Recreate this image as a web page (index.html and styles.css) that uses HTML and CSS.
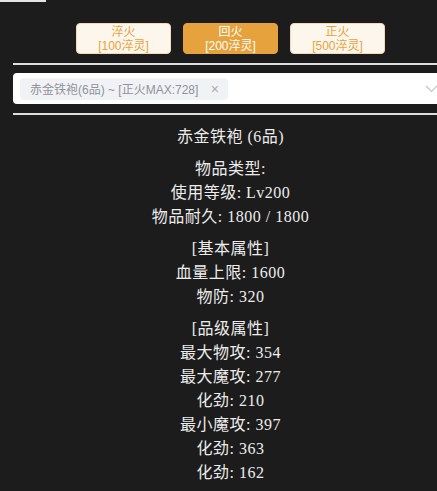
FILE: index.html
```html
<!DOCTYPE html>
<html lang="zh">
<head>
<meta charset="utf-8">
<title>赤金铁袍</title>
<link rel="stylesheet" href="styles.css">
</head>
<body>
<div class="topstrip"></div>
<div class="panel">
  <div class="btn-row">
    <button class="btn"><span class="btn-line">淬火</span><span class="btn-line">[100淬灵]</span></button>
    <button class="btn btn-active"><span class="btn-line">回火</span><span class="btn-line">[200淬灵]</span></button>
    <button class="btn"><span class="btn-line">正火</span><span class="btn-line">[500淬灵]</span></button>
  </div>
  <div class="divider"></div>
  <div class="select">
    <span class="tag">赤金铁袍(6品) ~ [正火MAX:728]<span class="tag-close">×</span></span>
    <svg class="chevron" width="13" height="8" viewBox="0 0 13 8"><path d="M1 1 L6.5 6.5 L12 1" fill="none" stroke="#c0c4cc" stroke-width="1.2"/></svg>
  </div>
  <div class="divider"></div>
  <div class="info">
    <div class="title">赤金铁袍 (6品)</div>
    <div class="group">
      <div>物品类型:</div>
      <div>使用等级: Lv200</div>
      <div>物品耐久: 1800 / 1800</div>
    </div>
    <div class="group">
      <div>[基本属性]</div>
      <div>血量上限: 1600</div>
      <div>物防: 320</div>
    </div>
    <div class="group">
      <div>[品级属性]</div>
      <div>最大物攻: 354</div>
      <div>最大魔攻: 277</div>
      <div>化劲: 210</div>
      <div>最小魔攻: 397</div>
      <div>化劲: 363</div>
      <div>化劲: 162</div>
    </div>
  </div>
</div>
</body>
</html>
```

FILE: styles.css
```css
html, body {
  margin: 0;
  padding: 0;
}
body {
  background: #1c1c1c;
  width: 437px;
  height: 491px;
  overflow: hidden;
  font-family: "Liberation Serif", "Noto Sans CJK SC", serif;
}
.topstrip {
  height: 2px;
  width: 46px;
  background: #e4e4e4;
}
.panel {
  margin-left: 13px;
  width: 435px;
}
.btn-row {
  display: flex;
  justify-content: center;
  gap: 12px;
  padding-top: 21px;
}
.btn {
  width: 95px;
  height: 31px;
  box-sizing: border-box;
  border: 1px solid #f5dab1;
  border-radius: 4px;
  background: #fdf6ec;
  color: #e6a23c;
  font-family: "Liberation Sans", "Noto Sans CJK SC", sans-serif;
  font-size: 12px;
  line-height: 14px;
  padding: 0;
  margin: 0;
  display: flex;
  flex-direction: column;
  align-items: center;
  justify-content: center;
}
.btn-line {
  display: block;
  height: 14px;
  line-height: 14px;
}
.btn-active {
  background: #e6a23c;
  border-color: #e6a23c;
  color: #fff;
}
.divider {
  height: 2px;
  background: #dedede;
  margin-top: 9px;
}
.select {
  margin-top: 8px;
  height: 31px;
  background: #fff;
  border-radius: 4px;
  display: flex;
  align-items: center;
  justify-content: space-between;
  padding: 0 10px 0 7px;
  box-sizing: border-box;
}
.tag {
  display: inline-flex;
  align-items: center;
  height: 22px;
  box-sizing: border-box;
  padding: 0 9px 0 10px;
  background: #f0f2f5;
  border-radius: 4px;
  color: #909399;
  font-family: "Liberation Sans", "Noto Sans CJK SC", sans-serif;
  font-size: 12px;
  width: 208px;
}
.tag-close {
  margin-left: auto;
  font-size: 14px;
  color: #a8abb2;
}
.chevron {
  display: block;
}
.info {
  margin-top: 10px;
  text-align: center;
  color: #ececec;
  font-size: 16px;
  line-height: 24px;
  letter-spacing: 0.5px;
}
.group {
  margin-top: 8px;
}
```
